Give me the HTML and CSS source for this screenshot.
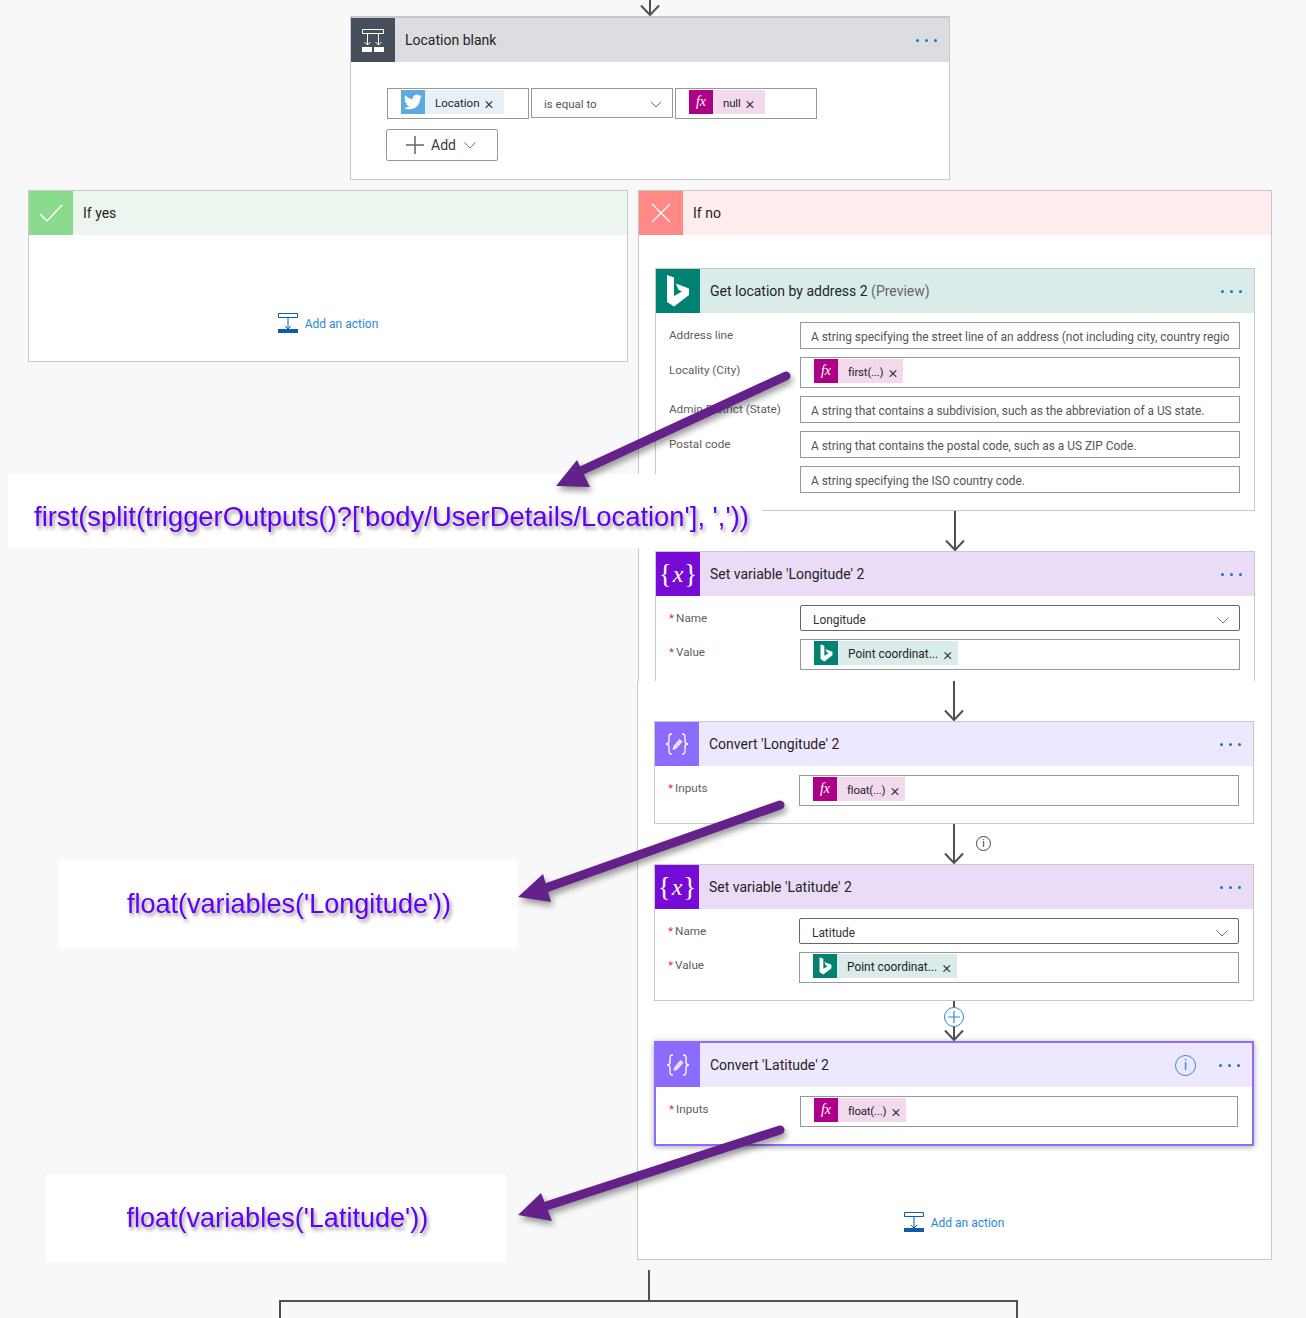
FILE: index.html
```html
<!DOCTYPE html>
<html lang="en">

<head>
    <meta charset="utf-8">
    <link rel="stylesheet" href="styles.css">
    <title>Location blank flow</title>
</head>

<body>
    <svg class="defs" width="0" height="0">
        <symbol id="arrow-down" viewBox="0 0 24 40">
            <path d="M12 0V39M3 29.5 12 39l9-9.5" fill="none" stroke="#505050" stroke-width="2" />
        </symbol>
        <symbol id="bing" viewBox="0 0 24 32">
            <path d="M1 0 8 2.500V21L16 16.500 12.500 14.800 9.800 8.500 23 13.500V20L8 31.500 1 27Z" fill="#fff" />
        </symbol>
        <symbol id="chevron" viewBox="0 0 12 8">
            <path d="M.5 1.500 6 7 11.500 1.500" fill="none" stroke="#777" />
        </symbol>
        <symbol id="add-action" viewBox="0 0 20 20">
            <path d="M.5.5h19v4H.5zM10 5v11M7 13l3 3 3-3" fill="none" stroke="#0f5ca8" />
            <path d="M0 16h20v4H0z" fill="#0f5ca8" />
        </symbol>
        <symbol id="convert" viewBox="0 0 44 44">
            <path d="M17 12c-3 0-3 1-3 4v3c0 2-1 3-3 3 2 0 3 1 3 3v3c0 3 0 4 3 4M27 12c3 0 3 1 3 4v3c0 2 1 3 3 3-2 0-3 1-3 3v3c0 3 0 4-3 4" fill="none" stroke="#fff" stroke-width="1.300" />
            <path d="M18 27.500l1-3.500 5.500-6.500 2.500 2-5.500 6.500Z" fill="#fff" fill-opacity=".75" stroke="#fff" stroke-width=".8" />
        </symbol>
    </svg>

    <main class="canvas">
        <div class="top-stem">
            <svg class="top-arrow" viewBox="0 24 24 16"><use href="#arrow-down" width="24" height="40" /></svg>
        </div>

        <section class="card card-condition">
            <header class="card-head head-condition">
                <div class="card-icon icon-condition">
                    <svg width="24" height="24" viewBox="0 0 24 24">
                        <path d="M1.500 1.500h21v4h-21zM6.500 6v11M17.500 6v11M3.500 14l3 3 3-3M14.500 14l3 3 3-3" fill="none" stroke="#fff" />
                        <path d="M1 19h10v5H1zM13 19h10v5H13z" fill="#fff" />
                    </svg>
                </div>
                <div class="card-title">Location blank</div>
                <div class="dots"><i></i><i></i><i></i></div>
            </header>
            <div class="condition-body">
                <div class="condition-row">
                    <div class="cond-box">
                        <span class="token token-twitter">
                            <span class="token-icon icon-twitter">
                                <svg width="18" height="18" viewBox="0 0 24 24"><path fill="#fff" d="M23.950 4.570a10 10 0 0 1-2.820.77 4.960 4.960 0 0 0 2.160-2.720c-.95.55-2 .96-3.130 1.200a4.920 4.920 0 0 0-8.380 4.480C7.690 8.100 4.070 6.130 1.640 3.160a4.820 4.820 0 0 0-.67 2.480c0 1.710.87 3.210 2.190 4.100a4.900 4.900 0 0 1-2.230-.62v.06a4.920 4.920 0 0 0 3.950 4.830 5 5 0 0 1-2.210.08 4.940 4.940 0 0 0 4.600 3.420A9.870 9.870 0 0 1 0 19.540a13.940 13.940 0 0 0 7.550 2.210c9.050 0 14-7.500 14-13.980 0-.21 0-.42-.02-.63a9.940 9.940 0 0 0 2.460-2.550z" /></svg>
                            </span>
                            <span class="token-text">Location</span><span class="token-x">×</span>
                        </span>
                    </div>
                    <div class="cond-box cond-select">
                        <span>is equal to</span>
                        <svg class="chevron" width="12" height="8"><use href="#chevron" /></svg>
                    </div>
                    <div class="cond-box">
                        <span class="token token-fx">
                            <span class="token-icon icon-fx">fx</span>
                            <span class="token-text">null</span><span class="token-x">×</span>
                        </span>
                    </div>
                </div>
                <div class="add-btn">
                    <svg width="18" height="18" viewBox="0 0 18 18"><path d="M0 9h18M9 0v18" stroke="#666" stroke-width="1.500" /></svg>
                    <span>Add</span>
                    <svg class="chevron" width="12" height="8"><use href="#chevron" /></svg>
                </div>
            </div>
        </section>

        <div class="branches">
            <section class="panel panel-yes">
                <header class="card-head head-yes">
                    <div class="card-icon icon-yes">
                        <svg width="24" height="20" viewBox="0 0 24 20"><path d="M1 11l7 7L23 2" fill="none" stroke="#fff" stroke-width="1.500" /></svg>
                    </div>
                    <div class="card-title">If yes</div>
                </header>
                <div class="add-action add-action-yes">
                    <svg width="20" height="20"><use href="#add-action" /></svg>
                    <span>Add an action</span>
                </div>
            </section>

            <div class="no-column">
                <section class="panel panel-no-top">
                    <header class="card-head head-no">
                        <div class="card-icon icon-no">
                            <svg width="20" height="20" viewBox="0 0 20 20"><path d="M1 1l18 18M19 1 1 19" fill="none" stroke="#fff" stroke-width="1.300" /></svg>
                        </div>
                        <div class="card-title">If no</div>
                    </header>
                    <div class="panel-inner">
                        <section class="card card-bing">
                            <header class="card-head head-bing">
                                <div class="card-icon icon-bing"><svg width="24" height="32"><use href="#bing" /></svg></div>
                                <div class="card-title">Get location by address 2 <span class="muted">(Preview)</span></div>
                                <div class="dots"><i></i><i></i><i></i></div>
                            </header>
                            <div class="fields">
                                <div class="label">Address line</div>
                                <div class="input"><span class="input-text">A string specifying the street line of an address (not including city, country region, state, postal code)</span></div>
                                <div class="label">Locality (City)</div>
                                <div class="input input-token">
                                    <span class="token token-fx"><span class="token-icon icon-fx">fx</span><span class="token-text">first(...)</span><span class="token-x">×</span></span>
                                </div>
                                <div class="label">Admin District (State)</div>
                                <div class="input"><span class="input-text">A string that contains a subdivision, such as the abbreviation of a US state.</span></div>
                                <div class="label">Postal code</div>
                                <div class="input"><span class="input-text">A string that contains the postal code, such as a US ZIP Code.</span></div>
                                <div class="label"></div>
                                <div class="input"><span class="input-text">A string specifying the ISO country code.</span></div>
                            </div>
                        </section>

                        <div class="connector"><svg width="24" height="40"><use href="#arrow-down" /></svg></div>

                        <section class="card card-setvar-cut">
                            <header class="card-head head-var">
                                <div class="card-icon icon-var">{<em>x</em>}</div>
                                <div class="card-title">Set variable 'Longitude' 2</div>
                                <div class="dots"><i></i><i></i><i></i></div>
                            </header>
                            <div class="fields">
                                <div class="label"><b>*</b>Name</div>
                                <div class="input input-select"><span>Longitude</span><svg class="chevron" width="12" height="8"><use href="#chevron" /></svg></div>
                                <div class="label"><b>*</b>Value</div>
                                <div class="input input-token">
                                    <span class="token token-bing"><span class="token-icon icon-bing"><svg width="13" height="18"><use href="#bing" /></svg></span><span class="token-text">Point coordinat...</span><span class="token-x">×</span></span>
                                </div>
                            </div>
                        </section>
                    </div>
                </section>

                <section class="panel panel-no-bottom">
                    <div class="connector"><svg width="24" height="40"><use href="#arrow-down" /></svg></div>

                    <section class="card">
                        <header class="card-head head-convert">
                            <div class="card-icon icon-convert"><svg width="44" height="44"><use href="#convert" /></svg></div>
                            <div class="card-title">Convert 'Longitude' 2</div>
                            <div class="dots"><i></i><i></i><i></i></div>
                        </header>
                        <div class="fields">
                            <div class="label"><b>*</b>Inputs</div>
                            <div class="input input-token">
                                <span class="token token-fx"><span class="token-icon icon-fx">fx</span><span class="token-text">float(...)</span><span class="token-x">×</span></span>
                            </div>
                        </div>
                    </section>

                    <div class="connector">
                        <svg width="24" height="40"><use href="#arrow-down" /></svg>
                        <span class="info-badge">i</span>
                    </div>

                    <section class="card">
                        <header class="card-head head-var">
                            <div class="card-icon icon-var">{<em>x</em>}</div>
                            <div class="card-title">Set variable 'Latitude' 2</div>
                            <div class="dots"><i></i><i></i><i></i></div>
                        </header>
                        <div class="fields">
                            <div class="label"><b>*</b>Name</div>
                            <div class="input input-select"><span>Latitude</span><svg class="chevron" width="12" height="8"><use href="#chevron" /></svg></div>
                            <div class="label"><b>*</b>Value</div>
                            <div class="input input-token">
                                <span class="token token-bing"><span class="token-icon icon-bing"><svg width="13" height="18"><use href="#bing" /></svg></span><span class="token-text">Point coordinat...</span><span class="token-x">×</span></span>
                            </div>
                        </div>
                    </section>

                    <div class="connector">
                        <svg width="24" height="40"><use href="#arrow-down" /></svg>
                        <span class="plus-badge"><svg width="12" height="12" viewBox="0 0 12 12"><path d="M0 6h12M6 0v12" stroke="#2b88d8" stroke-width="1.200" /></svg></span>
                    </div>

                    <section class="card card-selected">
                        <header class="card-head head-convert">
                            <div class="card-icon icon-convert"><svg width="44" height="44"><use href="#convert" /></svg></div>
                            <div class="card-title">Convert 'Latitude' 2</div>
                            <span class="info-head">i</span>
                            <div class="dots"><i></i><i></i><i></i></div>
                        </header>
                        <div class="fields">
                            <div class="label"><b>*</b>Inputs</div>
                            <div class="input input-token">
                                <span class="token token-fx"><span class="token-icon icon-fx">fx</span><span class="token-text">float(...)</span><span class="token-x">×</span></span>
                            </div>
                        </div>
                    </section>

                    <div class="add-action add-action-no">
                        <svg width="20" height="20"><use href="#add-action" /></svg>
                        <span>Add an action</span>
                    </div>
                </section>
            </div>
        </div>

        <div class="merge-stem"></div>
        <div class="merge-bar"></div>

        <!-- annotations pasted over the flow -->
        <div class="note note-first"><span>first(split(triggerOutputs()?['body/UserDetails/Location'], ','))</span></div>
        <div class="note note-long"><span>float(variables('Longitude'))</span></div>
        <div class="note note-lat"><span>float(variables('Latitude'))</span></div>

        <svg class="note-arrows" width="1306" height="1318" viewBox="0 0 1306 1318">
            <g class="note-arrow">
                <path d="M786 376 574 474" stroke="#64218a" stroke-width="9" stroke-linecap="round" fill="none" />
                <path d="M556 486 577 460 590 487Z" fill="#64218a" />
            </g>
            <g class="note-arrow">
                <path d="M780 805 540 890" stroke="#64218a" stroke-width="9" stroke-linecap="round" fill="none" />
                <path d="M518 897 543 874 551 902Z" fill="#64218a" />
            </g>
            <g class="note-arrow">
                <path d="M780 1130 540 1208" stroke="#64218a" stroke-width="9" stroke-linecap="round" fill="none" />
                <path d="M518 1215 541 1193 552 1221Z" fill="#64218a" />
            </g>
        </svg>
    </main>
</body>

</html>
```

FILE: styles.css
```css
*,
*:before,
*:after {
    box-sizing: border-box;
}

html,
body {
    margin: 0;
    padding: 0;
}

body {
    background: #f8f8f8;
    font-family: "Roboto", "Liberation Sans", sans-serif;
    color: #252423;
}

.defs {
    position: absolute;
}

.canvas {
    position: relative;
    width: 1306px;
    height: 1318px;
    overflow: hidden;
}

/* top of the flow */
.top-stem {
    width: 600px;
    height: 16px;
    margin-left: 350px;
    display: flex;
    justify-content: center;
}

.top-arrow {
    width: 24px;
    height: 16px;
}

/* cards */
.card {
    width: 600px;
    background: #fff;
    border: 1px solid #c8c8c8;
}

.card-head {
    display: flex;
    align-items: center;
    height: 44px;
}

.card-icon {
    flex: none;
    width: 44px;
    height: 44px;
    display: flex;
    align-items: center;
    justify-content: center;
}

.card-title {
    flex-grow: 1;
    padding-left: 10px;
    font-size: 14px;
    font-weight: 400;
    color: #252423;
}

.muted {
    color: #666;
}

.dots {
    display: flex;
    gap: 6px;
    margin: 1px 12px 0 0;
}

.dots i {
    width: 3px;
    height: 3px;
    border-radius: 50%;
    background: #0f78d4;
}

.head-condition {
    background: #dcdde0;
}

.icon-condition {
    background: #474f5a;
}

.head-yes {
    background: #ecf6ee;
}

.icon-yes {
    background: #8adb8d;
}

.head-no {
    background: #ffecec;
}

.icon-no {
    background: #ff8a85;
}

.head-bing {
    background: #d9ece9;
}

.icon-bing {
    background: #008272;
}

.head-var {
    background: #eadbf7;
}

.icon-var {
    background: #770bd6;
    color: #fff;
    font-family: "Liberation Serif", serif;
    font-size: 27px;
}

.icon-var em {
    font-size: 24px;
    padding: 0 1px;
}

.head-convert {
    background: #eee8fe;
}

.icon-convert {
    background: #8c6cff;
}

/* condition card */
.card-condition {
    height: 164px;
    margin-left: 350px;
    border-top-width: 2px;
}

.condition-body {
    padding: 26px 0 0 36px;
}

.condition-row {
    display: flex;
    gap: 2px;
}

.cond-box {
    width: 142px;
    height: 31px;
    padding: 1px 0 0 13px;
    border: 1px solid #989898;
    background: #fff;
}

.cond-box .token {
    padding-right: 9px;
}

.cond-select {
    display: flex;
    align-items: center;
    justify-content: space-between;
    height: 30px;
    padding: 2px 10px 0 12px;
    font-size: 11.500px;
    color: #555;
}

.add-btn {
    display: flex;
    align-items: center;
    width: 112px;
    height: 32px;
    margin: 10px 0 0 -1px;
    padding-left: 19px;
    border: 1px solid #989898;
    border-radius: 2px;
    font-size: 14px;
    color: #3b3a39;
}

.add-btn span {
    margin: 0 8px 0 7px;
}

/* tokens */
.token {
    display: inline-flex;
    align-items: center;
    height: 24px;
    padding-right: 4px;
    font-size: 11.500px;
    color: #252423;
}

.token-icon {
    flex: none;
    width: 24px;
    height: 24px;
    display: flex;
    align-items: center;
    justify-content: center;
}

.token-text {
    margin-left: 10px;
    padding-top: 1px;
}

.token-x {
    margin: 1px 2px 0 5px;
    font-size: 17px;
    font-weight: 300;
    line-height: 18px;
    color: #1b1a19;
}

.token-twitter {
    background: #e6f1fa;
}

.icon-twitter {
    background: #5ea9dd;
}

.token-fx {
    background: #f2d9ee;
}

.token-fx .token-text {
    letter-spacing: -.2px;
}

.icon-fx {
    background: #ae0087;
    color: #fff;
    font-family: "Liberation Serif", serif;
    font-style: italic;
    font-size: 14px;
}

.token-bing {
    background: #d9ece9;
    font-size: 11.900px;
}

/* branches */
.branches {
    display: flex;
    gap: 10px;
    margin: 10px 0 0 28px;
}

.panel {
    background: #fff;
    border: 1px solid #c8c8c8;
}

.panel-yes {
    width: 600px;
    height: 172px;
}

.no-column {
    width: 634px;
}

.panel-no-top {
    height: 491px;
    border-bottom: 0;
}

.panel-inner {
    padding: 33px 0 0 16px;
}

.panel-no-bottom {
    height: 579px;
    margin-left: -1px;
    padding-left: 16px;
    border-top: 0;
}

.card-bing {
    height: 243px;
}

.card-setvar-cut {
    height: 130px;
    border-bottom: 0;
}

.panel-no-bottom .card {
    height: 103px;
}

.panel-no-bottom .card:nth-of-type(2) {
    height: 137px;
}

.panel-no-bottom .card-selected {
    height: 105px;
    border: 2px solid #8c6cff;
    box-shadow: 0 1px 6px rgba(0, 0, 0, .35);
}

/* fields */
.fields {
    display: grid;
    grid-template-columns: 131px 440px;
    gap: 8px 0;
    padding: 9px 0 0 13px;
}

.label {
    padding-top: 5px;
    font-size: 11.700px;
    line-height: 16px;
    color: #605e5c;
}

.label b {
    margin-right: 2px;
    font-weight: 400;
    color: #d13438;
}

.input {
    display: flex;
    align-items: center;
    height: 27px;
    padding: 2px 10px 0;
    border: 1px solid #989898;
    font-size: 11.900px;
    color: #555;
    white-space: nowrap;
}

.input-text {
    overflow: hidden;
}

.input-select {
    justify-content: space-between;
    height: 26px;
    padding: 3px 10px 0 12px;
    border-color: #666;
    border-radius: 2px;
    color: #323130;
}

.input-token {
    align-items: flex-start;
    height: 31px;
    padding: 1px 0 0 13px;
}

.card-selected .fields {
    grid-template-columns: 131px 438px;
}

/* connectors */
.connector {
    position: relative;
    width: 600px;
    height: 40px;
    display: flex;
    justify-content: center;
}

.info-badge {
    position: absolute;
    left: 322px;
    top: 12px;
    width: 15px;
    height: 15px;
    border: 1px solid #444;
    border-radius: 50%;
    font-size: 10px;
    line-height: 13px;
    text-align: center;
    color: #333;
}

.plus-badge {
    position: absolute;
    left: 290px;
    top: 6px;
    width: 20px;
    height: 20px;
    display: flex;
    align-items: center;
    justify-content: center;
    background: #fff;
    border: 1px solid #2b88d8;
    border-radius: 50%;
}

.info-head {
    width: 21px;
    height: 21px;
    margin-right: 23px;
    border: 1.500px solid #2b88d8;
    border-radius: 50%;
    font-size: 14px;
    line-height: 18px;
    text-align: center;
    color: #2b88d8;
}

/* add an action */
.add-action {
    display: flex;
    justify-content: center;
    align-items: center;
    gap: 7px;
    font-size: 12px;
    color: #2b88d8;
}

.add-action span {
    margin-top: 2px;
}

.add-action-yes {
    padding-top: 78px;
}

.add-action-no {
    width: 600px;
    margin-top: 66px;
}

/* bottom branch lines */
.merge-stem {
    width: 2px;
    height: 30px;
    margin: 10px 0 0 648px;
    background: #505050;
}

.merge-bar {
    width: 739px;
    height: 30px;
    margin-left: 279px;
    border: 2px solid #505050;
    border-bottom: 0;
}

/* annotations */
.note {
    position: absolute;
    display: flex;
    align-items: center;
    justify-content: center;
    background: #fff;
    font-family: "Liberation Sans", sans-serif;
    font-size: 28px;
    color: #6200f5;
    text-shadow: 2px 3px 4px rgba(0, 0, 0, .42);
    white-space: nowrap;
}

.note span {
    display: inline-block;
    transform: scaleX(.965);
}

.note-first {
    left: 8px;
    top: 474px;
    width: 754px;
    height: 74px;
    padding: 11px 0 0 12px;
}

.note-first span {
    transform: scaleX(.978);
}

.note-long {
    left: 58px;
    top: 860px;
    width: 460px;
    height: 88px;
    padding-left: 2px;
}

.note-lat {
    left: 46px;
    top: 1174px;
    width: 460px;
    height: 88px;
    padding-left: 2px;
}

.note-arrows {
    position: absolute;
    left: 0;
    top: 0;
}

.note-arrow {
    filter: drop-shadow(2px 4px 3px rgba(0, 0, 0, .4));
}
```
